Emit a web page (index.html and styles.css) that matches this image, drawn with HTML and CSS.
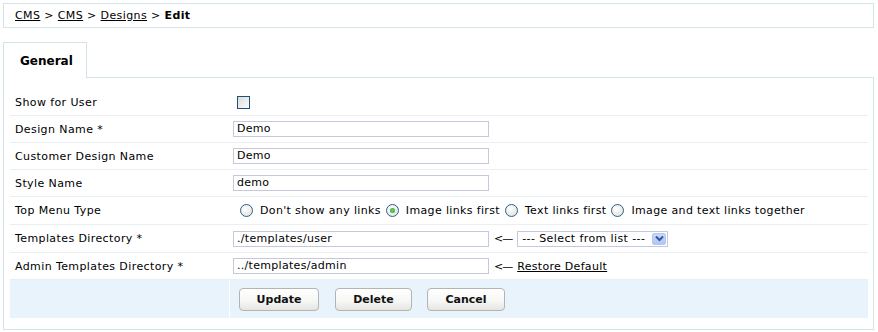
FILE: index.html
```html
<!DOCTYPE html>
<html lang="en">
<head>
  <meta charset="UTF-8">
  <title>Edit Design</title>
  <link rel="stylesheet" href="styles.css">
</head>
<body>
  <div class="crumbs">
    <a href="#">CMS</a> &gt; <a href="#">CMS</a> &gt; <a href="#">Designs</a> &gt; <b>Edit</b>
  </div>

  <div class="tabs">
    <div class="tab">General</div>
  </div>

  <div class="panel">
    <div class="row">
      <div class="lbl">Show for User</div>
      <div class="fld"><span class="check"></span></div>
    </div>
    <div class="row">
      <div class="lbl">Design Name *</div>
      <div class="fld"><span class="text">Demo</span></div>
    </div>
    <div class="row">
      <div class="lbl">Customer Design Name</div>
      <div class="fld"><span class="text">Demo</span></div>
    </div>
    <div class="row">
      <div class="lbl">Style Name</div>
      <div class="fld"><span class="text">demo</span></div>
    </div>
    <div class="row tall">
      <div class="lbl">Top Menu Type</div>
      <div class="fld radios">
        <span class="radio"></span><span class="opt">Don't show any links</span>
        <span class="radio on"></span><span class="opt">Image links first</span>
        <span class="radio"></span><span class="opt">Text links first</span>
        <span class="radio"></span><span class="opt">Image and text links together</span>
      </div>
    </div>
    <div class="row tall">
      <div class="lbl">Templates Directory *</div>
      <div class="fld">
        <span class="text">./templates/user</span>
        <span class="arrow">&lt;&#8212;</span>
        <span class="select">--- Select from list ---<span class="drop"><svg width="9" height="7" viewBox="0 0 9 7"><path d="M1 1.5 L4.5 5 L8 1.5" fill="none" stroke="#34589c" stroke-width="2"/></svg></span></span>
      </div>
    </div>
    <div class="row">
      <div class="lbl">Admin Templates Directory *</div>
      <div class="fld">
        <span class="text">../templates/admin</span>
        <span class="arrow">&lt;&#8212;</span>
        <a href="#" class="restore">Restore Default</a>
      </div>
    </div>
    <div class="row buttons">
      <div class="lbl"></div>
      <div class="fld">
        <button>Update</button>
        <button>Delete</button>
        <button>Cancel</button>
      </div>
    </div>
  </div>
</body>
</html>
```

FILE: styles.css
```css
body { margin: 0; padding: 3px 4px 0 3px; font-family: "DejaVu Sans", Verdana, sans-serif; font-size: 11px; letter-spacing: 0.4px; color: #000; background: #fff; }
a { color: #000; }

.crumbs { border: 1px solid #d3e4e8; height: 23px; line-height: 24px; padding-left: 11px; }

.tabs { margin-top: 14px; display: flex; }
.tab { position: relative; z-index: 1; width: 66px; height: 35px; line-height: 36px; padding-left: 16px; border: 1px solid #d3e4e8; border-bottom: none; font-weight: bold; font-size: 12px; letter-spacing: 0; background: #fff; }

.panel { border: 1px solid #d3e4e8; margin-top: -1px; padding: 11px 5px 11px 6px; }

.row { display: grid; grid-template-columns: 219px 1fr; height: 26px; border-bottom: 1px solid #e8f0f2; align-items: center; }
.row.tall { height: 27px; }
.lbl { padding-left: 5px; }
.fld { padding-left: 4px; display: flex; align-items: center; height: 100%; }

.check { width: 11px; height: 11px; border: 1px solid #1c5180; margin-left: 4px; background: linear-gradient(135deg, #dcdcd6, #fbfbfa); }

.text { width: 248px; height: 14px; line-height: 14px; border: 1px solid #c8c8dc; padding: 0 3px; letter-spacing: 0.3px; }

.radios { padding-left: 11px; }
.radio { width: 11px; height: 11px; border: 1px solid #2f5f8e; border-radius: 50%; background: radial-gradient(circle at 40% 35%, #fff, #dcdcd6); margin-right: 7px; position: relative; }
.radio.on::after { content: ""; position: absolute; left: 3px; top: 3px; width: 5px; height: 5px; border-radius: 50%; background: radial-gradient(circle, #6fd26f, #2a9c2a); }
.opt { margin-right: 5px; letter-spacing: 0.35px; }

.arrow { margin: 0 5px 0 5px; letter-spacing: -1px; }
.select { display: flex; align-items: center; height: 14px; border: 1px solid #c8c8dc; padding-left: 4px; width: 145px; justify-content: space-between; }
.drop { width: 14px; height: 12px; margin-right: 1px; background: linear-gradient(#c9d8fb, #b0c6f5); border: 1px solid #b7c8ee; border-radius: 2px; display: flex; align-items: center; justify-content: center; box-sizing: border-box; }
.restore { letter-spacing: 0.3px; }

.buttons { height: 38px; border-bottom: none; }
.buttons .lbl, .buttons .fld { background: #e9f3fb; height: 38px; }
.buttons .fld { border-left: 1px solid #fff; padding-left: 9px; gap: 16px; }
button { font-family: "DejaVu Sans", Verdana, sans-serif; font-size: 11px; font-weight: bold; height: 23px; padding: 0; border: 1px solid #b4b4b4; border-radius: 4px; background: linear-gradient(#fff, #f6f6f4 60%, #e4e4e0); color: #111; }
button:nth-child(1) { width: 80px; }
button:nth-child(2) { width: 77px; margin-right: -1px; }
button:nth-child(3) { width: 78px; }
```
